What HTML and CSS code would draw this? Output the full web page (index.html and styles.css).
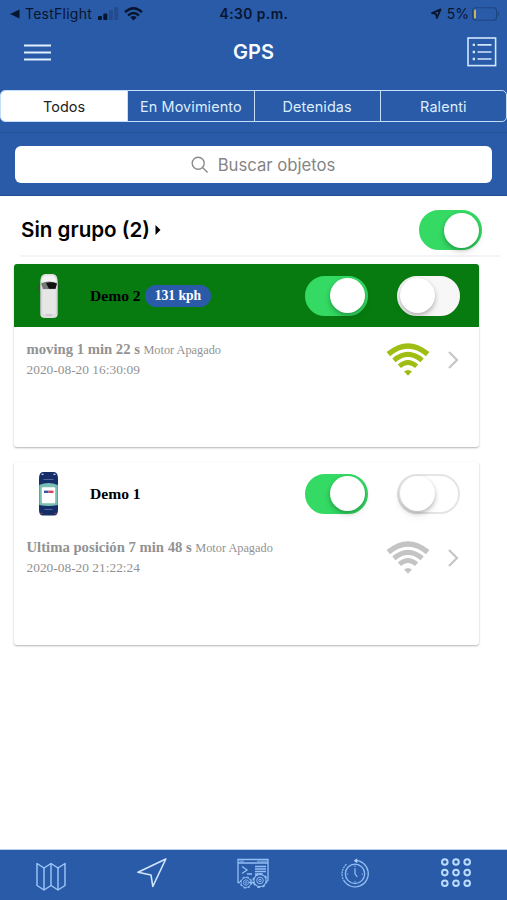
FILE: index.html
```html
<!DOCTYPE html>
<html lang="es">
<head>
<meta charset="utf-8">
<meta name="viewport" content="width=device-width, initial-scale=1">
<title>GPS</title>
<link rel="stylesheet" href="styles.css">
</head>
<body>
<svg width="0" height="0" class="defs" aria-hidden="true">
  <defs>
    <symbol id="wifi" viewBox="0 0 44 34">
      <g fill="none" stroke="currentColor">
        <path d="M2.3 11.2 Q22 -5.2 41.7 11.2" stroke-width="5.4"/>
        <path d="M7.9 17.3 Q22 5.3 36.1 17.3" stroke-width="5"/>
        <path d="M13.4 23.2 Q22 15.6 30.6 23.2" stroke-width="4.8"/>
      </g>
      <path d="M18 28.6 Q22 25.6 26 28.6 L22 32.8 Z" fill="currentColor"/>
    </symbol>
    <symbol id="chevron" viewBox="0 0 12 20">
      <path d="M2 2 L10 10 L2 18" fill="none" stroke="currentColor" stroke-width="2.2"/>
    </symbol>
    <symbol id="gear" viewBox="0 0 16 16">
      <g fill="none" stroke="currentColor">
        <circle cx="8" cy="8" r="6.1" stroke-width="1.1"/>
        <circle cx="8" cy="8" r="6.9" stroke-width="1.3" stroke-dasharray="2.7 2.72"/>
        <circle cx="8" cy="8" r="3.3" stroke-width="1"/>
        <circle cx="8" cy="8" r="1.2" stroke-width="1"/>
      </g>
    </symbol>
  </defs>
</svg>
<div class="app">
  <header class="top">
    <div class="status">
      <div class="status-left">
        <svg width="10" height="10" viewBox="0 0 10 10"><path d="M0 5 L9.5 .5 V9.5 Z" fill="currentColor"/></svg>
        <span class="carrier">TestFlight</span>
        <svg class="signal" width="21" height="14" viewBox="0 0 21 14"><rect x="0" y="9" width="4" height="4" rx="1" fill="#08152f"/><rect x="5.3" y="6.5" width="4" height="6.5" rx="1" fill="#08152f"/><rect x="10.8" y="3" width="4" height="10" rx="1" fill="#234b8d"/><rect x="16.3" y="0" width="4" height="13" rx="1" fill="#234b8d"/></svg>
        <svg class="wifi-status" width="19" height="14" viewBox="0 0 19 14"><g fill="none" stroke="currentColor" stroke-width="2.5"><path d="M1 5.2 Q9.5 -2.6 18 5.2"/><path d="M4.1 8.5 Q9.5 3.5 14.9 8.5"/></g><path d="M6.3 10.3 Q9.5 7.6 12.7 10.3 L9.5 13.6Z" fill="currentColor"/></svg>
      </div>
      <span class="clock">4:30 p.m.</span>
      <div class="status-right">
        <svg width="12" height="12" viewBox="0 0 12 12"><path d="M10.6 1.4 L6.9 10 L6.1 5.9 L2 5.1 Z" fill="none" stroke="currentColor" stroke-width="1.7" stroke-linejoin="round"/></svg>
        <span class="percent">5%</span>
        <svg width="28" height="14" viewBox="0 0 28 14"><rect x=".6" y=".8" width="24" height="12.4" rx="3" fill="none" stroke="#1e457f" stroke-width="1.1"/><rect x="2" y="2.5" width="2" height="9" rx=".8" fill="#c9b35f"/><path d="M25.8 4.5 Q28.6 7 25.8 9.5Z" fill="#1e457f"/></svg>
      </div>
    </div>
    <div class="navbar">
      <svg width="27" height="17" viewBox="0 0 27 17"><path d="M0 1.5H27M0 8.5H27M0 15.5H27" stroke="#e0f0ff" stroke-width="2.1"/></svg>
      <h1>GPS</h1>
      <svg width="30" height="30" viewBox="0 0 30 30"><g fill="none" stroke="#d2e6fc"><rect x="1" y="1" width="27.6" height="27.6" stroke-width="1.6"/><path d="M10.5 7.8H24.5M10.5 15H24.5M10.5 22H24.5" stroke-width="1.7"/><path d="M5.7 7.8H8M5.7 15H8M5.7 22H8" stroke-width="2.3"/></g></svg>
    </div>
    <nav class="segments">
      <span class="segment active">Todos</span>
      <span class="segment">En Movimiento</span>
      <span class="segment">Detenidas</span>
      <span class="segment">Ralenti</span>
    </nav>
    <div class="search-wrap">
      <div class="search">
        <svg width="18" height="18" viewBox="0 0 18 18"><g fill="none" stroke="#8b8b8b" stroke-width="1.4"><circle cx="7.2" cy="7.2" r="6"/><path d="M11.5 11.5L16.6 16.6"/></g></svg>
        <span>Buscar objetos</span>
      </div>
    </div>
  </header>
  <main>
    <div class="group">
      <h2>Sin grupo (2)</h2>
      <svg width="6" height="10" viewBox="0 0 6 10"><path d="M.5 0 L5.5 5 L.5 10Z"/></svg>
      <span class="toggle on"></span>
    </div>
    <article class="card moving">
      <div class="card-head">
        <svg class="vehicle" width="22" height="46" viewBox="0 0 22 46">
          <path d="M2 12 Q0 13 .8 17 M20 12 Q22 13 21.2 17" fill="none" stroke="#444" stroke-width="1.1"/>
          <path d="M2.3 11 Q2 1 7 1 H15 Q20 1 19.7 11 V41 Q19.7 45 15 45 H7 Q2.3 45 2.3 41Z" fill="#ddd"/>
          <path d="M4 9 Q4 2.5 8 2.5 H14 Q18 2.5 18 9Z" fill="#f2f2f2"/>
          <path d="M3 10.5 Q11 6.5 19 10.5 L17.5 16 H5Z" fill="#777"/>
          <path d="M8 10 Q14 8.3 18.8 10.5 L17.5 15.8 H11Z" fill="#111"/>
          <path d="M4.5 17 H17.5 V41 H4.5Z" fill="#e6e6e6"/>
          <path d="M2.7 18V41M19.3 18V41M8 42H14" stroke="#aaa" stroke-width=".7"/>
        </svg>
        <b class="name">Demo 2</b>
        <span class="speed">131 kph</span>
        <span class="toggle on"></span>
        <span class="toggle"></span>
      </div>
      <div class="card-body">
        <div class="info">
          <p><b>moving 1 min 22 s</b> <small>Motor Apagado</small></p>
          <p class="date">2020-08-20 16:30:09</p>
        </div>
        <svg class="wifi" width="44" height="34"><use href="#wifi"/></svg>
        <svg class="chevron" width="12" height="20"><use href="#chevron"/></svg>
      </div>
    </article>
    <article class="card">
      <div class="card-head">
        <svg class="vehicle" width="22" height="46" viewBox="0 0 22 46">
          <path d="M1 8 Q1 1 5 1 H16 Q20 1 20 8 V39 Q20 44.5 16 44.5 H5 Q1 44.5 1 39Z" fill="#162e68"/>
          <path d="M1.2 14 Q10.5 10 19.8 14 V34 Q10.5 36 1.2 34Z" fill="#79bfb4"/>
          <rect x="3.8" y="16.3" width="13.4" height="16" rx="1" fill="#fff"/>
          <path d="M6 20.8H10.5" stroke="#3a55ae" stroke-width="2.4"/><path d="M10.5 20.8H15.5" stroke="#d6435c" stroke-width="2.4"/>
          <path d="M5.5 8.5H15.5M6.5 38.5H14.5" stroke="#5368a0" stroke-width="1.2"/>
          <path d="M3.5 3.3H5.5M15.5 3.3H17.5" stroke="#c2d5e6" stroke-width="1.2"/>
          <path d="M2.3 42.5H4.5M16.5 42.5H18.7" stroke="#b33c55" stroke-width="1.2"/>
        </svg>
        <b class="name">Demo 1</b>
        <span class="toggle on"></span>
        <span class="toggle"></span>
      </div>
      <div class="card-body">
        <div class="info">
          <p><b>Ultima posición 7 min 48 s</b> <small>Motor Apagado</small></p>
          <p class="date">2020-08-20 21:22:24</p>
        </div>
        <svg class="wifi" width="44" height="34"><use href="#wifi"/></svg>
        <svg class="chevron" width="12" height="20"><use href="#chevron"/></svg>
      </div>
    </article>
  </main>
  <footer class="tabs">
    <span class="tab"><svg class="map" width="30" height="30" viewBox="0 0 30 30"><g fill="none" stroke="#9fc8fa" stroke-width="1.4" stroke-linejoin="round"><path d="M1 1.5 L8 6 L15 1.5 L22 6 L29 1.5 V23.5 L22 28 L15 23.5 L8 28 L1 23.5Z"/><path d="M8 6V28M15 1.5V23.5M22 6V28"/></g></svg></span>
    <span class="tab"><svg width="30" height="30" viewBox="0 0 30 30"><path d="M28.8 1 L1 14.3 L14 17 L15.8 28.5Z" fill="none" stroke="#d0e6ff" stroke-width="1.6" stroke-linejoin="round"/></svg></span>
    <span class="tab"><svg width="32" height="31" viewBox="0 0 32 31"><g fill="none" stroke="#94bff5" stroke-width="1.3"><path d="M3 24.5H1V1.5H31V23M1 5H31M12 24.5H17"/><path d="M2.5 3.2H7M20 3.2H30" stroke-width=".8"/><path d="M5 8.5 L10 12 L5 15.5M10 16H15"/><path d="M18 8.5H29M18 11H29M18 13.5H29M18 16H24"/></g><g color="#94bff5"><use href="#gear" x="2.5" y="18" width="13" height="13"/><use href="#gear" x="15" y="14.5" width="16" height="16"/></g></svg></span>
    <span class="tab"><svg width="30" height="31" viewBox="0 0 30 31"><g fill="none" stroke="#91bdf3" stroke-width="1.25"><path d="M15 2.5 A13.2 13.2 0 1 1 3.5 22"/><path d="M6.4 6.2 A13.2 13.2 0 0 0 3.5 22" stroke-dasharray="2 .8"/><circle cx="15" cy="15.8" r="9.7"/><path d="M15 10.3V15.8L17.4 18.8"/><path d="M15 7.5V9M15 23V24.5M6.8 16H8.2M21.8 16H23.2" stroke-width="1"/></g><path d="M17.2 .2 L13.8 2.7 L17.2 5.2Z" fill="#b4d4fb"/></svg></span>
    <span class="tab"><svg width="32" height="31" viewBox="0 0 32 31"><g fill="none" stroke="#b9dbff" stroke-width="2"><circle cx="4.8" cy="4" r="2.8"/><circle cx="16" cy="4" r="2.8"/><circle cx="27.2" cy="4" r="2.8"/><circle cx="4.8" cy="14.6" r="2.8"/><circle cx="16" cy="14.6" r="2.8"/><circle cx="27.2" cy="14.6" r="2.8"/><circle cx="4.8" cy="25.2" r="2.8"/><circle cx="16" cy="25.2" r="2.8"/><circle cx="27.2" cy="25.2" r="2.8"/></g></svg></span>
  </footer>
</div>
</body>
</html>
```
FILE: styles.css
```css
* { box-sizing: border-box; }
body { margin: 0; background: #fff; font-family: Inter, "Liberation Sans", sans-serif; }
h1, h2, p { margin: 0; }
svg { display: block; flex: none; }
.defs { position: absolute; }
.app { display: flex; flex-direction: column; height: 900px; overflow: hidden; }

.top { height: 196px; background: #2a5ba8; border-bottom: 1px solid #244e92; }
.status { display: grid; grid-template-columns: 1fr auto 1fr; align-items: center; height: 27px; padding: 0 7px 0 10px; color: #08152f; }
.status-left, .status-right { display: flex; align-items: center; }
.status-right { justify-content: flex-end; }
.carrier { width: 68px; margin-left: 5px; font-size: 14px; letter-spacing: .25px; white-space: nowrap; }
.signal { margin-left: 5px; }
.wifi-status { margin-left: 5px; }
.clock { margin-right: 2px; font-size: 13.8px; font-weight: 600; letter-spacing: .45px; }
.percent { margin: 0 3px 0 5px; font-size: 14px; }
.navbar { display: flex; align-items: center; justify-content: space-between; height: 50px; padding: 0 10px 0 24px; }
.navbar h1 { margin-right: 11px; color: #f7fbff; font-size: 20px; font-weight: 600; line-height: 24px; }
.segments { display: grid; grid-template-columns: repeat(4, 1fr); height: 32px; margin-top: 13px; border: 1.5px solid #c4defa; border-radius: 5px; overflow: hidden; }
.segment { display: flex; align-items: center; justify-content: center; color: #dbeeff; font-size: 14.4px; letter-spacing: .1px; white-space: nowrap; border-left: 1px solid #c4defa; }
.segment.active { border-left: 0; background: #fff; color: #222; }
.search-wrap { margin-top: 10px; padding: 13px 15px 0; border-top: 1px solid #244f94; }
.search { display: flex; align-items: center; justify-content: center; gap: 9px; height: 37px; padding-left: 19px; border-radius: 6px; background: #fff; color: #858585; font-size: 16.7px; }

main { flex: 1; }
.group { display: flex; align-items: center; height: 61px; margin: 0 7px 7px 20px; padding: 9px 18px 0 1px; border-bottom: 2px solid #f4f4f8; }
.group h2 { width: 129px; margin-right: 5px; font-size: 20.6px; font-weight: 600; line-height: 26px; white-space: nowrap; }
.group .toggle { margin-left: auto; }

.toggle { flex: none; width: 63px; height: 40px; padding: 1px; border: 2px solid #e5e5e7; border-radius: 20px; background: #fff; }
.toggle::before { content: ""; display: block; width: 35px; height: 35px; margin-top: -.5px; border-radius: 50%; background: #fff; box-shadow: 0 2px 4px rgba(0, 0, 0, .25), 0 5px 8px rgba(0, 0, 0, .07); }
.toggle.on { border-color: #34da63; background: #34da63; }
.toggle.on::before { margin-left: 22px; }

.card { width: 465px; height: 183px; margin: 0 0 15px 14px; border-radius: 3px; background: #fff; box-shadow: 0 1px 2px rgba(0, 0, 0, .3); }
.card-head { display: flex; align-items: center; height: 63px; padding: 0 19px 0 24px; border-radius: 3px 3px 0 0; font-family: "Liberation Serif", serif; }
.moving .card-head { background: #077b10; }
.name { margin-left: 30px; font-size: 15.6px; white-space: nowrap; }
.speed { height: 22px; margin-left: 4px; padding: 0 10px; border-radius: 11px; background: #2a5ba8; color: #fff; font-size: 13.6px; font-weight: bold; line-height: 22px; }
.card-head .toggle.on { margin-left: auto; margin-right: 29px; }
.moving .toggle:not(.on) { background: #f7f7f7; border-color: #f7f7f7; }
.card-body { display: flex; align-items: flex-start; padding: 13px 20px 0 12.5px; font-family: "Liberation Serif", serif; color: #929292; }
.info { flex: 1; font-size: 14px; line-height: 19px; white-space: nowrap; }
.info b { font-size: 14.7px; }
.info small { font-size: 12.3px; }
.info .date { font-size: 13.4px; line-height: 20px; }
.wifi { margin: 3px 17px 0 0; color: #9fbe13; }
.card:not(.moving) .wifi { color: #c4c4c4; }
.chevron { margin-top: 10px; color: #c5c5c5; }

.tabs { display: grid; grid-template-columns: repeat(5, 1fr); height: 51px; border-top: 1px solid #b8d0ef; background: #2a5ba8; }
.tab { display: flex; justify-content: center; padding-top: 8px; }
.map { margin-top: 4px; }
```
